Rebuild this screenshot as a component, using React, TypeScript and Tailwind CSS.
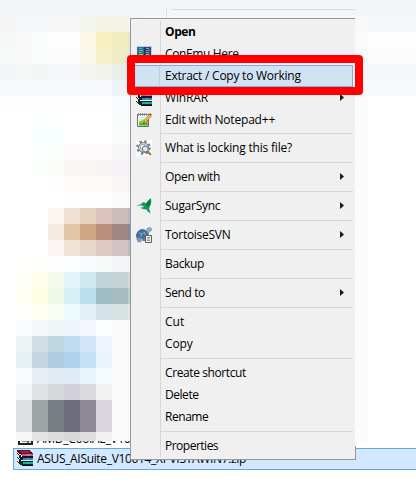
import React from "react";

type Entry = {
  label?: string;
  sep?: boolean;
  arrow?: boolean;
  hot?: boolean;
  icon?: React.ReactNode;
  text?: string;
};

const Books = () => (
  <svg width="16" height="16" viewBox="0 0 16 16" shapeRendering="crispEdges">
    <path d="M0 1h5v13H0z" fill="#e9e9e9" />
    <path d="M0 0h12l4 3v2H5L0 2z" fill="#5d0f2a" />
    <path d="M2 1h9l3 2H6z" fill="#97244c" />
    <path d="M5 4h11v2H5z" fill="#e0529a" />
    <path d="M5 6h11v1H5z" fill="#2a0a18" />
    <path d="M2 6l3 1h11v3H5L2 8z" fill="#0c1c33" />
    <path d="M6 8h10v2H6z" fill="#2a86cf" />
    <path d="M2 10l3 1h11v4H5l-3-2z" fill="#062c25" />
    <path d="M6 12h10v2H6z" fill="#16b184" />
    <path d="M5 15h11v1H5z" fill="#111" />
    <path d="M0 3h1v1H0zM1 4h1v1H1zM2 5h2v1H2zM0 7h1v1H0zM1 8h1v1H1zM2 9h2v1H2zM0 11h1v1H0zM1 12h1v1H1zM2 13h1v1H2zM3 14h2v1H3z" fill="#222" />
    <path d="M10 4h3v2h-3z" fill="#b98a70" />
    <path d="M10 8h2v2h-2zM10 12h2v2h-2z" fill="#5e9d9e" />
  </svg>
);

const Archive = () => (
  <svg width="16" height="16" viewBox="0 0 16 16" shapeRendering="crispEdges">
    <path d="M1 0h15v16H1z" fill="#222" />
    <path d="M3 0h11v14H3z" fill="#f6f6f6" />
    <path d="M5 12h6v1H5z" fill="#999" />
    <path d="M10 11h2v3h-2z" fill="#3b73c4" />
    <path d="M12 11h2v2h-2z" fill="#e7c54a" />
  </svg>
);

const Panels = () => (
  <svg width="16" height="16" viewBox="0 0 16 16" shapeRendering="crispEdges">
    <path d="M1 0h15v15H1z" fill="#c3ccd2" />
    <path d="M1 1h7v13H1z" fill="#1f6fb0" />
    <path d="M8 1h7v13H8z" fill="#2b4c8c" />
    <path d="M8 1h1v13H8z" fill="#123c66" />
    <path d="M3 2h3v1H3zM10 2h3v1h-3z" fill="#35d04f" />
    <path d="M3 4h4v1H3z" fill="#e69a2e" />
    <path d="M10 4h4v1h-4z" fill="#a263d0" />
    <path d="M3 6h3v1H3zM10 6h3v1h-3z" fill="#4fd05f" />
    <path d="M3 8h4v1H3zM10 8h3v1h-3z" fill="#9ec84a" />
  </svg>
);

const Notepad = () => (
  <svg width="16" height="16" viewBox="0 0 16 16">
    <path d="M1.5 2.5h11v12h-11z" fill="#fbfcf7" stroke="#6f6f6f" />
    <path d="M2.5 1v3M4.5 1v3M6.5 1v3M8.5 1v3M10.5 1v3" stroke="#8b8b8b" strokeWidth=".8" />
    <path d="M3 5.5h8M3 7.5h7" stroke="#c6cbd0" strokeWidth=".7" />
    <path d="M3 9c3-.8 5-1 9-3v7.5H3z" fill="#86d63a" />
    <path d="M3 11h9v2.5H3z" fill="#59b827" />
    <path d="M7.5 11.5l1-3 4.7-6 2 1.6-5 6z" fill="#f1c255" stroke="#8f6425" strokeWidth=".7" />
    <path d="M13 2.5l1-1.6 1.9 1.5-1 1.4z" fill="#d2362a" />
    <path d="M7.3 11.8l.5-1.4 1 .8z" fill="#222" />
  </svg>
);

const Gear = () => (
  <svg width="16" height="16" viewBox="0 0 16 16">
    <path d="M0 0h16v16H0z" fill="#fbfbfb" />
    <circle cx="7.5" cy="7.5" r="6.2" fill="none" stroke="#77818a" strokeWidth="2.2" strokeDasharray="2.4 2.47" />
    <circle cx="7.5" cy="7.5" r="5" fill="#cfd6db" stroke="#6d7780" />
    <circle cx="7" cy="7" r="2.6" fill="#fbfbfb" stroke="#8b959c" strokeWidth=".8" />
    <circle cx="9.3" cy="9" r="3" fill="#dbeaf3" stroke="#59636b" strokeWidth=".9" />
    <path d="M11.5 11.3l3.4 3.6" stroke="#8f5d20" strokeWidth="2" />
    <path d="M11.7 11.3l3 3.2" stroke="#e0aa5a" strokeWidth=".7" />
  </svg>
);

const Bird = () => (
  <svg width="16" height="16" viewBox="0 0 16 16">
    <path d="M0 7.6L5 6.2 6.3 4.5 8.4 4.3l1.4 1.2L12 2.8 15 .2l.3 3-.4 3-1 2.4-.9 1.6.7 2 1 3.4-3.2-2.4-1-1.8-2.6-.2L4.4 10 8 8.8 6 7.6z" fill="#109a55" />
    <path d="M9.6 6.3L14.6.6l-.4 4.8L12 9.6z" fill="#087a40" />
  </svg>
);

const Turtle = () => (
  <svg width="16" height="16" viewBox="0 0 16 16">
    <path d="M10.5 4.5l.7-3L13.5.4l2 1.2-.3 2-2 .8-1 3.6h-2z" fill="#8fb0ce" stroke="#4e6c8b" strokeWidth=".6" />
    <path d="M.4 9.6C.5 5 3.5 2.4 6.8 2.6c3 .2 4.8 3 4.9 6.2l-1.2 2.4H2z" fill="#456f9f" stroke="#2f4c70" strokeWidth=".7" />
    <path d="M3 5.5l2.5 1.6L9 5M5.5 7.1l-.7 3M8.5 5.5l1 3.5" stroke="#9fbfdc" strokeWidth=".8" fill="none" />
    <path d="M.6 10.6h4.6l-.4 4.2H2z" fill="#7d9fbf" stroke="#4e6c8b" strokeWidth=".6" />
    <path d="M5.5 11h4v3h-3z" fill="#5c7fa3" />
    <path d="M9.5 8.5h6v7h-6z" fill="#f3f3f3" stroke="#5c5c5c" />
    <path d="M11 10.5h3M11 12h3M11 13.5h3" stroke="#666" strokeWidth=".7" />
  </svg>
);

const sep: Entry = { sep: true };

const topEntries: Entry[] = [
  { label: "Open", text: "font-bold tracking-[-0.4px]" },
  { label: "ConEmu Here", icon: <Panels />, text: "tracking-[-0.36px]" },
  { label: "Extract / Copy to Working", hot: true, text: "tracking-[-0.24px]" },
  { label: "WinRAR", arrow: true, icon: <Books />, text: "tracking-[-0.15px]" },
  { label: "Edit with Notepad++", icon: <Notepad />, text: "tracking-[-0.2px]" },
];

const restEntries: Entry[] = [
  { label: "What is locking this file?", icon: <Gear />, text: "tracking-[-0.2px]" },
  sep,
  { label: "Open with", arrow: true, text: "tracking-[-0.3px]" },
  sep,
  { label: "SugarSync", arrow: true, icon: <Bird />, text: "tracking-[-0.28px]" },
  sep,
  { label: "TortoiseSVN", arrow: true, icon: <Turtle />, text: "tracking-[-0.28px]" },
  sep,
  { label: "Backup", text: "tracking-[-0.35px]" },
  sep,
  { label: "Send to", arrow: true, text: "tracking-[-0.4px]" },
  sep,
  { label: "Cut" },
  { label: "Copy", text: "tracking-[-0.1px]" },
  sep,
  { label: "Create shortcut", text: "tracking-[-0.4px]" },
  { label: "Delete", text: "tracking-[-0.45px]" },
  { label: "Rename", text: "tracking-[-0.45px]" },
  sep,
  { label: "Properties", text: "tracking-[-0.5px]" },
];

function Row({ e }: { e: Entry }) {
  if (e.sep) {
    return (
      <div className="ml-[30px] mr-[2px] h-[7px] pt-[3px]">
        <div className="h-px bg-[#d7d7d7]" />
      </div>
    );
  }
  return (
    <div
      className={`relative mr-[2px] flex h-[22px] border ${
        e.hot ? "border-[#78aee5] bg-[#d1e2f2]" : "border-transparent"
      }`}
    >
      <span className={`w-[29px] pl-1 pt-[2px] ${e.hot ? "-ml-px mr-px border-r border-[#bdd0e2]" : ""}`}>{e.icon}</span>
      <span className={`ml-1 whitespace-nowrap pt-px leading-[17px] ${e.text ?? ""}`}>{e.label}</span>
      {e.arrow && (
        <svg className="ml-auto mr-2 mt-[6px]" width="4" height="7" viewBox="0 0 4 7">
          <path d="M0 0l4 3.5L0 7z" fill="#1c1c1c" />
        </svg>
      )}
    </div>
  );
}

const W = "#ffffff";
const mosaic: string[][] = [
  ["#f4f5f7", "#f4f5f7", "#f4f5f7", "#f4f5f7", "#f4f5f7", "#f4f5f7", "#f4f5f7", "#f4f5f7", "#f4f5f7"],
  ["#f5f5f5", "#f4f6fa", "#f5f6f8", "#f7f7f7", "#f7f7f7", "#f3f5ef", "#f4f2e2", "#f4f2e2", "#f4f5f7"],
  ["#f5f7f6", "#f8f8f8", "#fafdfc", "#fdfdfd", "#fdfdfd", "#faf7e7", "#f7f1bf", "#f1edbc", "#e9e8d0"],
  ["#f7f8f8", "#f8f8f8", "#fbfdfc", "#fcfcfc", "#fcfcfc", "#faf8ea", "#f6f0cb", "#efebc6", "#e3e7dc"],
  ["#f3f5f8", "#f4f7f6", "#f4f6f6", "#f4f6f8", "#f4f6f8", "#f4f5f3", "#f2f3eb", "#eaeee8", "#e4eaea"],
  ["#f7f9fc", "#f7f9fc", "#f7f9fc", "#f7f9fc", "#f7f9fc", "#f7f9fc", "#f7f9fc", "#eef3f7", "#eaf0f4"],
  ["#fefefe", "#fefefe", "#fefefe", "#fefefe", "#fefefe", "#fefefe", "#fefefe", "#f8fbfb", "#f5f8f8"],
  [W, W, "#fdfffe", "#fdfffe", W, W, W, "#fafbfb", "#f7f8f8"],
  [W, W, "#faffff", "#faffff", W, W, W, "#fafbfb", "#f7f8f8"],
  [W, W, "#fdfffe", "#fcfefc", "#fcfafb", "#fcfafb", "#fcfafb", "#f6f6f7", "#f3f3f5"],
  [W, W, "#fdfffc", "#fafdfa", "#f9f7f6", "#f7f6f5", "#f8f4f3", "#f5f3f5", "#f1f0f3"],
  [W, W, W, "#fefefe", "#fdfcfa", "#fbfaf8", "#fbfaf8", "#f8f7f6", "#f5f4f3"],
  [W, W, W, W, "#fefefe", "#fefefe", "#fdfdfd", "#fafafa", "#f6f6f6"],
  [W, W, W, "#faf5ef", "#f2e1d2", "#e6d1bf", "#dec3bd", "#cbbdbc", "#b6b8c8"],
  [W, W, W, "#f5ebe1", "#e4c7a7", "#cfa885", "#bd8d7d", "#a28585", "#8489a0"],
  [W, W, W, "#faf5f2", "#f1e4d5", "#e8d6c8", "#ddc9c2", "#d1c3c4", "#b8bbca"],
  [W, "#fffffd", "#fefefc", "#fdfefd", "#fafefe", "#f9fcff", "#f7f9f8", "#f4f5f8", "#f2f4f7"],
  [W, "#fefff8", "#feffea", "#f4fbee", "#e2f5fa", "#d0e8f0", "#bfd4d9", "#c4d2d3", "#d2dcdc"],
  [W, "#fffff6", "#feffe2", "#edf9e5", "#d6eff5", "#bcdded", "#9dbdc5", "#a6bec1", "#bdd0d0"],
  [W, "#fffffc", "#fffff1", "#f8fdf3", "#edfafb", "#e0f0f6", "#d4e1e6", "#d8e1e2", "#dfe6e6"],
  [W, "#fafcff", "#f4f8f9", "#eff6f8", "#f0f5fb", "#f4f7fe", "#fcfeff", "#fafafa", "#f7f7f7"],
  [W, "#edf4f6", "#d0dfe6", "#bfd6e3", "#bfdbef", "#d2e5f8", "#eef5fe", "#fafafa", "#f7f7f7"],
  [W, "#e7f0f4", "#c3d6e1", "#afcce0", "#b2d3eb", "#c5e1f5", "#ebf3fd", "#fafafa", "#f7f7f7"],
  [W, "#f8fafc", "#e9eef4", "#e2eaf4", "#dfecf7", "#e7f4fb", "#f6fbff", "#fafafa", "#f7f7f7"],
  [W, "#f3f6f6", "#dfe1e3", "#d5d7d9", "#d2d1d8", "#dadade", "#f2f2f3", "#fafafa", "#f7f7f7"],
  [W, "#dee0e3", "#9fa4a6", "#797e82", "#6e6d7b", "#8e8995", "#d8d5dc", "#fafafa", "#f7f7f7"],
  [W, "#dee0e3", "#9fa4a6", "#797e82", "#6e6d7b", "#8e8995", "#d8d5dc", "#fafafa", "#f7f7f7"],
  [W, "#f5f7f6", "#e3e4e4", "#dcdddd", "#d8d8db", "#dedde0", "#f3f2f3", "#fafafa", "#f7f7f7"],
];

// Colour beside the menu and of the page further right, top rows first.
const rightSide: string[][] = [
  ["#f4f5f7", "#f4f5f7"],
  ["#f8f8f8", "#f6f7f8"],
  ["#fafafb", "#fdfdfd"],
  ["#f7f8fa", "#fcfcfd"],
  ["#f4f6f9", "#f4f6f9"],
  ["#f6f8fb", "#f7f9fc"],
];

export default function App() {
  return (
    <div className="relative h-[493px] w-[416px] overflow-hidden bg-white font-['Open_Sans','Noto_Sans',sans-serif] text-[12px] text-black">
      <div className="h-[441px] overflow-hidden">
        {mosaic.map((cells, i) => {
          const [near, far] = rightSide[i] ?? ["#fbfbfb", W];
          return (
            <div key={i} className="flex h-4" style={{ background: far }}>
              {cells.map((c, j) => (
                <span key={j} className="size-4" style={{ background: c }} />
              ))}
              <span className="ml-52 size-4" style={{ background: near }} />
            </div>
          );
        })}
      </div>
      <div className="flex h-[7px] overflow-hidden pl-[17px]">
        <span className="-mt-[12px]"><Archive /></span>
        <span className="-mt-[11px] ml-1 leading-[17px] tracking-[-0.3px]">AMD_CoolAE_V10</span>
      </div>
      <div className="ml-[13px] flex h-[22px] border border-r-0 border-[#66a7e8] bg-[#d1e8ff] pl-[3px] pt-px">
        <Books />
        <span className="ml-1 whitespace-nowrap leading-[17px] tracking-[-0.33px]">ASUS_AISuite_V10014_XPVISTAWIN7.zip</span>
      </div>

      <div className="absolute left-[166px] top-2 flex h-[10px] w-[189px]">
        <div className="w-px bg-[#dfe0e2]" />
        <div className="ml-[5px] h-[2px] flex-1 border-b border-l border-[#dadbdd]" />
      </div>
      <div className="absolute left-[130px] top-[18px] h-[442px] w-[225px] border-b border-l border-t border-[#979797] bg-[#f0f0f0] pt-[2px]">
        <div className="absolute bottom-[2px] left-[29px] top-[2px] w-px bg-[#d7d7d7]" />
        <div className="absolute -bottom-px -right-px h-[14px] w-px bg-[#979797]" />
        {topEntries.map((e, i) => (
          <Row key={i} e={e} />
        ))}
        <div className="ml-[30px] mr-[2px] h-[6px] pt-[2px]">
          <div className="h-px bg-[#d7d7d7]" />
        </div>
        {restEntries.map((e, i) => (
          <Row key={i} e={e} />
        ))}
      </div>
      <div className="absolute left-[127px] top-[55px] h-[40px] w-[236px] rounded-[4px] border-8 border-[#ff0000]" />
    </div>
  );
}
